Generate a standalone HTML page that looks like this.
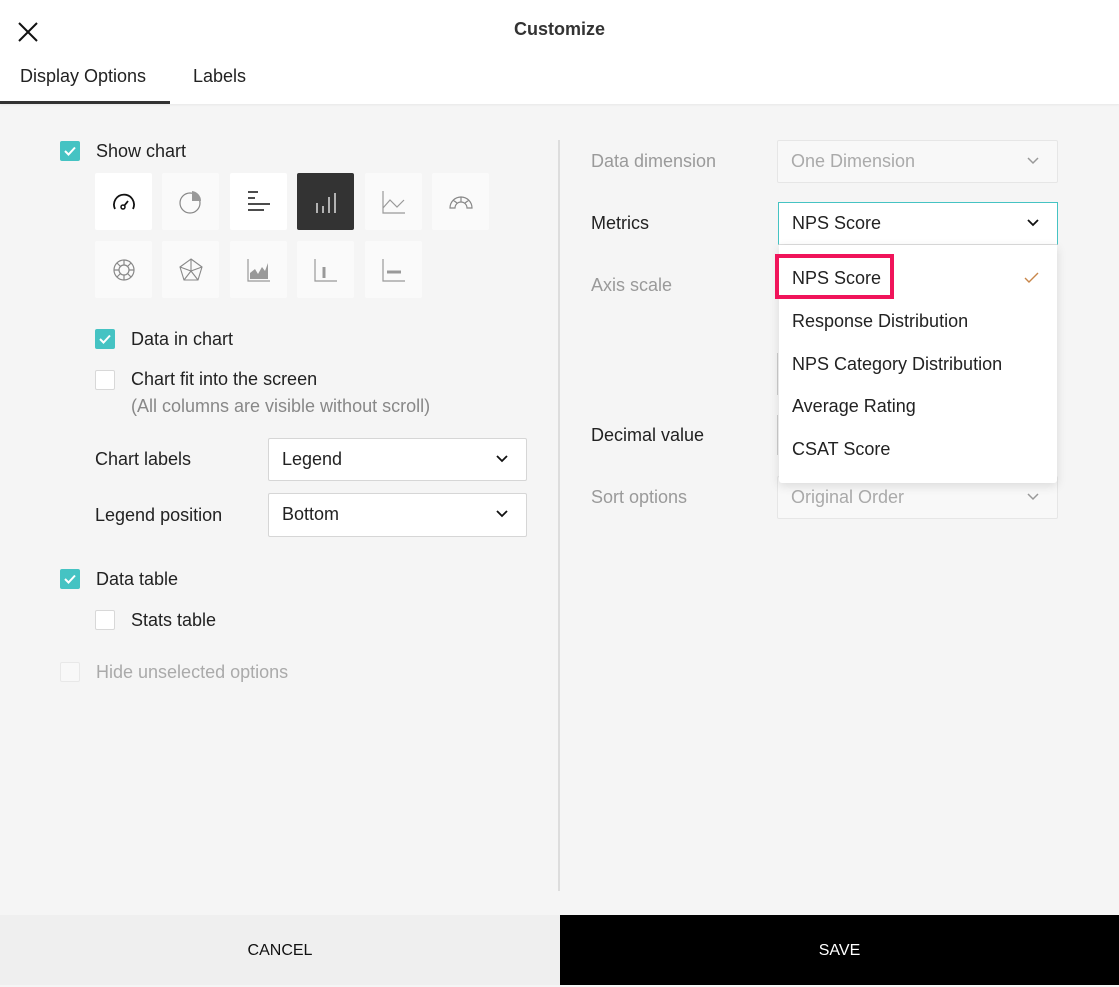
<!DOCTYPE html>
<html><head><style>
*{box-sizing:border-box;margin:0;padding:0}
body{width:1119px;height:985px;background:#f5f5f5;font-family:"Liberation Sans",sans-serif;color:#222;position:relative;overflow:hidden;font-size:18px}
.a{position:absolute}
.hdr{left:0;top:0;width:1119px;height:104px;background:#fff;box-shadow:0 1px 2px rgba(0,0,0,.06)}
.cb{width:20px;height:20px;border-radius:2px;background:#45c3c3}
.cb svg{position:absolute;left:4px;top:5px}
.ub{width:20px;height:20px;border:1px solid #d8d8d8;background:#fff;border-radius:2px}
.tile{width:57px;height:57px;background:#fafafa;border-radius:2px}
.tile svg{position:absolute;left:17px;top:17px}
.sel{background:#fff;border:1px solid #d6d6d6;border-radius:2px}
.sel span{position:absolute;left:13px;top:10px}
.chev{position:absolute;right:18px;top:16px}
.dis{color:#9a9a9a}
.dsel{background:#f8f8f8;border:1px solid #e6e6e6;border-radius:2px;color:#aaa}
.dsel span{position:absolute;left:13px;top:10px}
</style></head><body>
<div class="a hdr"></div>
<svg class="a" style="left:18px;top:22px" width="20" height="20"><path d="M1 1L19 19M19 1L1 19" stroke="#111" stroke-width="2"/></svg>
<div class="a" style="left:0;width:1119px;top:19px;text-align:center;font-size:18px;font-weight:bold;color:#333">Customize</div>
<div class="a" style="left:20px;top:66px;color:#222">Display Options</div>
<div class="a" style="left:193px;top:66px;color:#222">Labels</div>
<div class="a" style="left:0;top:101px;width:170px;height:3px;background:#333"></div>

<div class="a cb" style="left:60px;top:141px"><svg width="12" height="10"><path d="M1 5L4.5 8.5L11 1.5" stroke="#fff" stroke-width="2" fill="none"/></svg></div>
<div class="a" style="left:96px;top:141px">Show chart</div>

<div class="a tile" style="left:95px;top:173px;background:#fff"><svg width="24" height="24"><path d="M3 19A10 10 0 1 1 21 19" stroke="#111" stroke-width="1.8" fill="none"/><circle cx="11" cy="17" r="2" stroke="#111" stroke-width="1.5" fill="none"/><path d="M12 16L16 11" stroke="#111" stroke-width="1.8"/></svg></div>
<div class="a tile" style="left:162px;top:173px"><svg width="24" height="24"><circle cx="11" cy="13" r="10" stroke="#888" stroke-width="1.2" fill="none"/><path d="M13 1A10 10 0 0 1 22 11L13 11Z" fill="#999"/></svg></div>
<div class="a tile" style="left:230px;top:173px;background:#fff"><svg width="24" height="24"><path d="M1 2H11M1 8H8M1 14H23M1 20H17" stroke="#111" stroke-width="1.5"/></svg></div>
<div class="a tile" style="left:297px;top:173px;background:#333"><svg width="24" height="24"><path d="M3 13V23M9 16V23M15 7V23M21 3V23" stroke="#ddd" stroke-width="1.5"/></svg></div>
<div class="a tile" style="left:365px;top:173px"><svg width="24" height="24"><path d="M1 1V23H23M1 18L8 10L15 17L22 10" stroke="#999" stroke-width="1.2" fill="none"/></svg></div>
<div class="a tile" style="left:432px;top:173px"><svg width="24" height="24"><path d="M1 18A11 11 0 0 1 23 18H18A6 6 0 0 0 6 18Z M4 10L8 13M12 7V12M20 10L16 13" stroke="#888" stroke-width="1.2" fill="none"/></svg></div>
<div class="a tile" style="left:95px;top:241px"><svg width="24" height="24"><circle cx="12" cy="12" r="10" stroke="#888" stroke-width="1.2" fill="none"/><circle cx="12" cy="12" r="5" stroke="#888" stroke-width="1.2" fill="none"/><path d="M12 2V7M12 17V22M2 12H7M17 12H22M5 5L8.5 8.5M15.5 15.5L19 19M19 5L15.5 8.5M8.5 15.5L5 19" stroke="#888" stroke-width="1.2"/></svg></div>
<div class="a tile" style="left:162px;top:241px"><svg width="24" height="24"><path d="M12 1L23 9L19 22H5L1 9Z M12 1L12 13L23 9M12 13L19 22M12 13L5 22M12 13L1 9" stroke="#888" stroke-width="1.1" fill="none"/></svg></div>
<div class="a tile" style="left:230px;top:241px"><svg width="24" height="24"><path d="M1 1V23H23" stroke="#999" stroke-width="1.2" fill="none"/><path d="M3 21V15L8 11L11 16L15 9L18 13L21 5V21Z" fill="#999"/></svg></div>
<div class="a tile" style="left:297px;top:241px"><svg width="24" height="24"><path d="M1 1V23H23" stroke="#999" stroke-width="1.2" fill="none"/><path d="M10 9V20" stroke="#999" stroke-width="3"/></svg></div>
<div class="a tile" style="left:365px;top:241px"><svg width="24" height="24"><path d="M1 1V23H23" stroke="#999" stroke-width="1.2" fill="none"/><path d="M5 14H19" stroke="#999" stroke-width="3"/></svg></div>

<div class="a cb" style="left:95px;top:329px"><svg width="12" height="10"><path d="M1 5L4.5 8.5L11 1.5" stroke="#fff" stroke-width="2" fill="none"/></svg></div>
<div class="a" style="left:131px;top:329px">Data in chart</div>
<div class="a ub" style="left:95px;top:370px"></div>
<div class="a" style="left:131px;top:369px">Chart fit into the screen</div>
<div class="a" style="left:131px;top:396px;color:#888">(All columns are visible without scroll)</div>

<div class="a" style="left:95px;top:449px">Chart labels</div>
<div class="a sel" style="left:268px;top:438px;width:259px;height:43px"><span>Legend</span><svg class="chev" width="12" height="8"><path d="M1 1L6 6L11 1" stroke="#111" stroke-width="1.8" fill="none"/></svg></div>
<div class="a" style="left:95px;top:505px">Legend position</div>
<div class="a sel" style="left:268px;top:493px;width:259px;height:44px"><span>Bottom</span><svg class="chev" width="12" height="8"><path d="M1 1L6 6L11 1" stroke="#111" stroke-width="1.8" fill="none"/></svg></div>

<div class="a cb" style="left:60px;top:569px"><svg width="12" height="10"><path d="M1 5L4.5 8.5L11 1.5" stroke="#fff" stroke-width="2" fill="none"/></svg></div>
<div class="a" style="left:96px;top:569px">Data table</div>
<div class="a ub" style="left:95px;top:610px"></div>
<div class="a" style="left:131px;top:610px">Stats table</div>
<div class="a ub" style="left:60px;top:662px;border-color:#e8e8e8;background:#f8f8f8"></div>
<div class="a" style="left:96px;top:662px;color:#aaa">Hide unselected options</div>

<div class="a" style="left:558px;top:140px;width:2px;height:751px;background:#ddd"></div>

<div class="a dis" style="left:591px;top:151px">Data dimension</div>
<div class="a dsel" style="left:777px;top:140px;width:281px;height:43px"><span>One Dimension</span><svg class="chev" width="12" height="8"><path d="M1 1L6 6L11 1" stroke="#999" stroke-width="1.5" fill="none"/></svg></div>
<div class="a" style="left:591px;top:213px">Metrics</div>
<div class="a" style="left:778px;top:202px;width:280px;height:43px;background:#fff;border:1px solid #45c3c3;border-bottom-color:#ddd"><span class="a" style="left:13px;top:10px">NPS Score</span><svg class="chev" width="12" height="8"><path d="M1 1L6 6L11 1" stroke="#111" stroke-width="1.8" fill="none"/></svg></div>
<div class="a dis" style="left:591px;top:275px">Axis scale</div>
<div class="a" style="left:777px;top:353px;width:1px;height:42px;background:#ccc"></div>
<div class="a" style="left:591px;top:425px">Decimal value</div>
<div class="a" style="left:777px;top:415px;width:1px;height:40px;background:#ccc"></div>
<div class="a dis" style="left:591px;top:487px">Sort options</div>
<div class="a dsel" style="left:777px;top:476px;width:281px;height:43px"><span>Original Order</span><svg class="chev" width="12" height="8"><path d="M1 1L6 6L11 1" stroke="#999" stroke-width="1.5" fill="none"/></svg></div>

<div class="a" style="left:779px;top:245px;width:278px;height:238px;background:#fff;border-radius:0 0 3px 3px;box-shadow:0 3px 10px rgba(0,0,0,.12)">
<div class="a" style="left:13px;top:23px">NPS Score</div>
<svg class="a" style="left:245px;top:27px" width="15" height="11"><path d="M1 6L5 10L14 1" stroke="#c8864a" stroke-width="1.4" fill="none"/></svg>
<div class="a" style="left:13px;top:66px">Response Distribution</div>
<div class="a" style="left:13px;top:109px">NPS Category Distribution</div>
<div class="a" style="left:13px;top:151px">Average Rating</div>
<div class="a" style="left:13px;top:194px">CSAT Score</div>
</div>
<div class="a" style="left:775px;top:254px;width:119px;height:45px;border:4px solid #f0145a"></div>

<div class="a" style="left:0;top:915px;width:560px;height:70px;background:#efefef;text-align:center;line-height:72px;font-size:16px;color:#111">CANCEL</div>
<div class="a" style="left:560px;top:915px;width:559px;height:70px;background:#000;text-align:center;line-height:72px;font-size:16px;color:#fff">SAVE</div>
</body></html>
